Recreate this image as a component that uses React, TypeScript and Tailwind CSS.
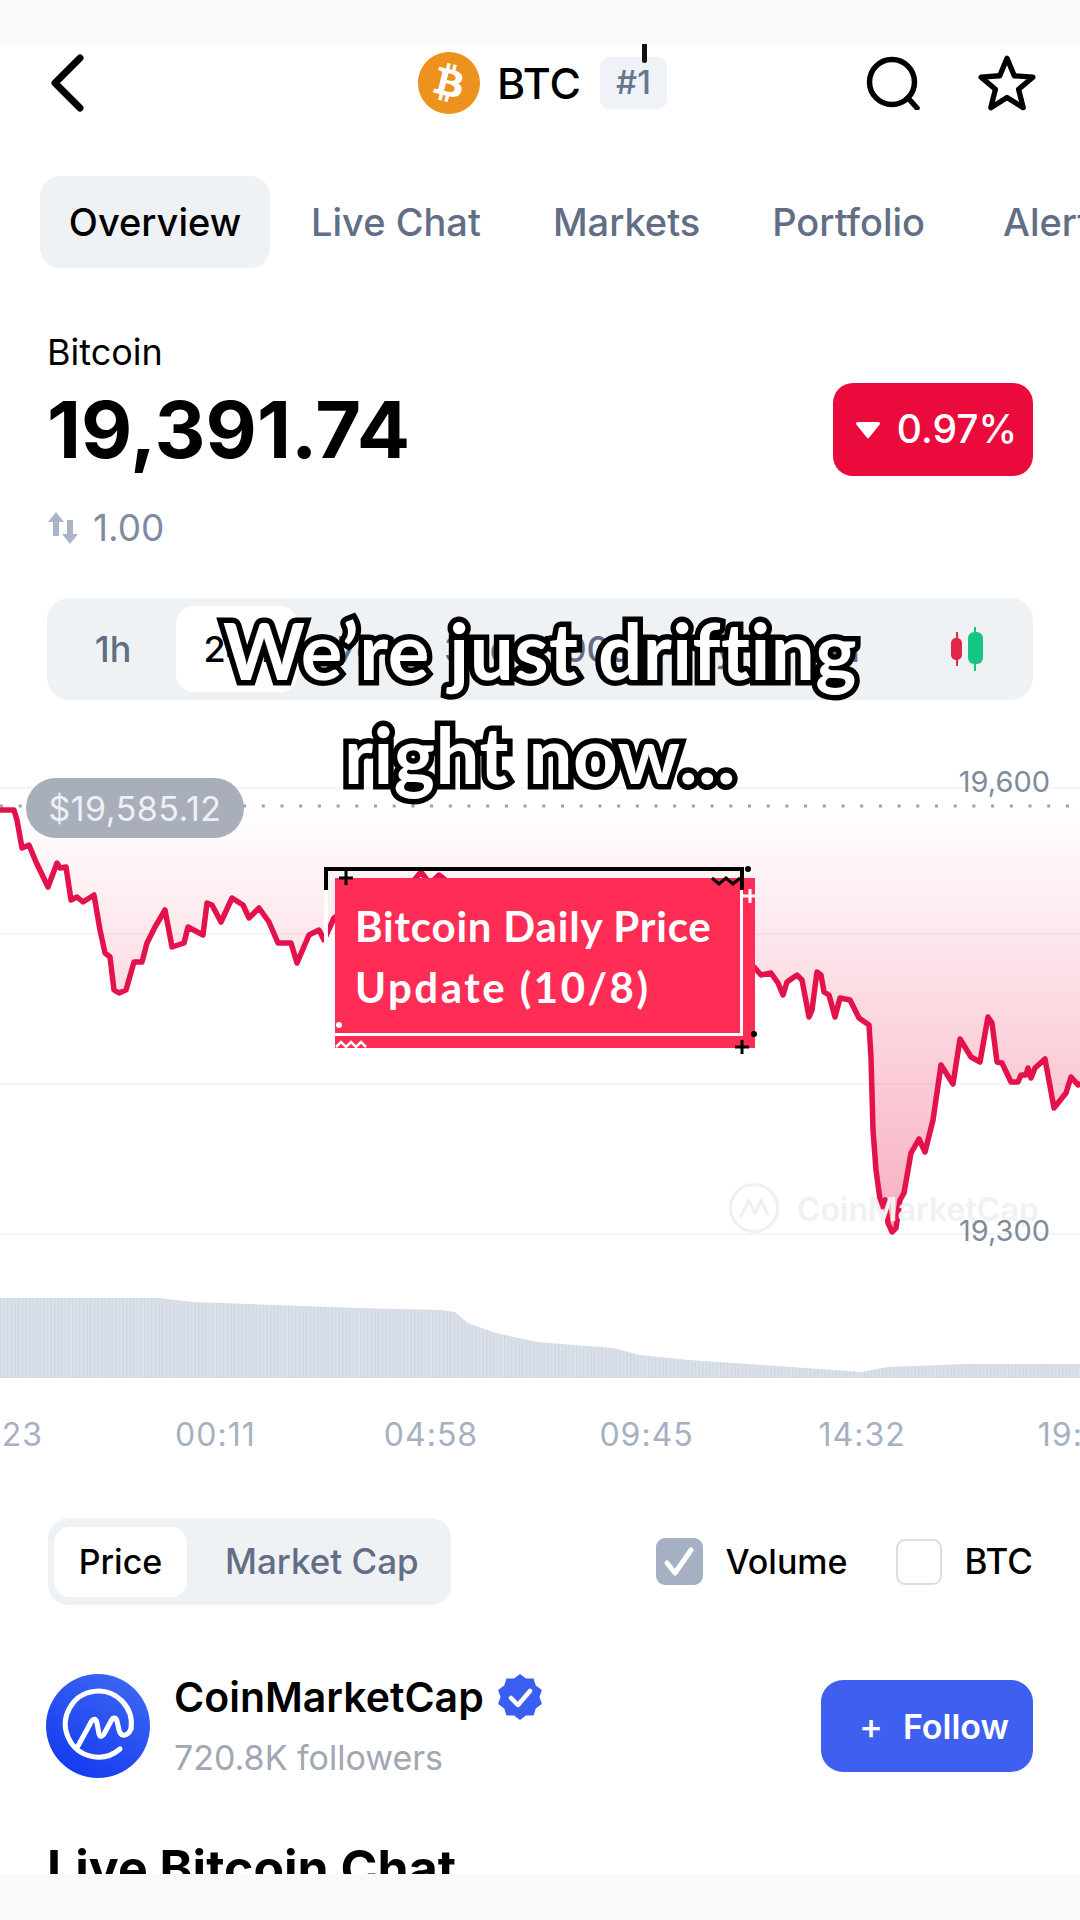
import React from "react";
import { FaBitcoin } from "react-icons/fa";

const linePts: [number, number][] = [
  [0,810],[14,810],[17,820],[22,848],[29,845],[36,862],[48,887],[57,863],[60,868],[66,867],[71,900],[77,897],[83,902],[94,895],[100,930],[105,953],[110,957],[114,990],[119,993],[126,990],[134,962],[142,962],[147,943],[155,927],[165,910],[172,947],[184,943],[188,927],[203,935],[207,903],[212,905],[221,922],[232,898],[243,905],[249,918],[259,908],[269,922],[278,943],[291,943],[297,963],[309,935],[319,930],[324,940],[334,918],[360,900],[390,890],[410,885],[421,872],[430,884],[439,875],[470,900],[540,920],[620,930],[700,945],[754,967],
  [761,975],[771,973],[778,983],[783,995],[787,982],[797,975],[802,980],[809,1017],[812,1010],[817,972],[821,975],[824,992],[829,995],[835,1017],[840,998],[850,1000],[859,1018],[869,1025],[871,1057],[873,1130],[876,1170],[881,1207],[885,1200],[888,1223],[892,1232],[896,1228],[900,1200],[904,1193],[911,1153],[919,1139],[925,1152],[933,1120],[941,1065],[953,1084],[960,1039],[971,1057],[980,1062],[988,1017],[992,1023],[997,1062],[1002,1063],[1011,1082],[1018,1082],[1021,1075],[1026,1075],[1028,1068],[1031,1078],[1035,1068],[1045,1059],[1054,1108],[1066,1093],[1071,1077],[1078,1085],[1080,1084],
];
const OY = 760;
const lineStr = linePts.map(([x, y]) => `${x},${y - OY}`).join(" ");
const areaStr = `0,${806 - OY} ${lineStr} 1080,${806 - OY}`;
const volTop: [number, number][] = [[0,1298],[158,1298],[193,1302],[275,1305],[358,1308],[441,1310],[455,1312],[468,1323],[496,1333],[537,1342],[613,1348],[640,1355],[689,1360],[792,1367],[861,1372],[888,1367],[964,1364],[1080,1364]];
const volStr = `0,98 ${volTop.map(([x, y]) => `${x},${y - 1280}`).join(" ")} 1080,98`;
const badgePts = Array.from({ length: 20 }, (_, i) => {
  const r = i % 2 === 0 ? 23 : 19.5;
  const a = (i * Math.PI) / 10 - Math.PI / 2;
  return `${23 + r * Math.cos(a)},${23 + r * Math.sin(a)}`;
}).join(" ");

export default function App() {
  return (
    <div className="relative w-[1080px] h-[1920px] overflow-hidden bg-white text-black flex flex-col font-['Inter','Liberation_Sans',sans-serif]">
      <div className="h-[44px] shrink-0 bg-[#f9f9f9]" />

      {/* Header */}
      <header className="relative h-[78px] shrink-0 flex items-center pl-[50px] pr-[44px] justify-between">
        <svg width="34" height="58" viewBox="0 0 34 58" fill="none" stroke="#000" strokeWidth="7" strokeLinecap="round" strokeLinejoin="round">
          <path d="M30 4 5 29l25 25" />
        </svg>
        <div className="absolute left-[417px] top-[7px] flex items-center">
          <FaBitcoin className="text-[#ee921f] w-[64px] h-[64px]" />
          <span className="ml-[16px] w-[86px] text-[43px] leading-none font-medium">BTC</span>
          <span className="ml-[17px] w-[67px] h-[52px] rounded-[9px] bg-[#eff2f7] flex items-center justify-center text-[#67758f] text-[33px] font-medium">#1</span>
        </div>
        <span className="absolute left-[642px] top-0 w-[5px] h-[19px] rounded-b-[3px] bg-[#111]" />
        <div className="flex items-center gap-[58px]">
          <svg width="54" height="54" viewBox="0 0 54 54" fill="none" stroke="#000" strokeWidth="5.5" strokeLinecap="round">
            <circle cx="26" cy="26" r="22.5" />
            <path d="M42 42l9 10" />
          </svg>
          <svg width="58" height="58" viewBox="0 0 24 24" fill="none" stroke="#000" strokeWidth="2.2" strokeLinejoin="round">
            <path d="M12 1.8l3 7.2 7.7.6-5.900 5 1.900 7.600L12 18l-6.700 4.200 1.900-7.600-5.900-5 7.700-.6z" />
          </svg>
        </div>
      </header>

      {/* Tabs */}
      <nav className="h-[92px] mt-[54px] shrink-0 pl-[40px] flex items-center whitespace-nowrap overflow-hidden text-[38px] font-medium text-[#616e85]">
        <span className="w-[230px] shrink-0 h-full rounded-[20px] bg-[#eff2f5] flex items-center justify-center text-black">Overview</span>
        <span className="ml-[41px]">Live Chat</span>
        <span className="ml-[72px]">Markets</span>
        <span className="ml-[72px]">Portfolio</span>
        <span className="ml-[78px]">Alerts</span>
      </nav>

      {/* Price */}
      <section className="relative px-[47px] mt-[62px] h-[268px] shrink-0">
        <div className="text-[36px] leading-[44px]">Bitcoin</div>
        <div className="mt-[9px] text-[79px] leading-[92px] font-bold">19,391.74</div>
        <div className="mt-[31px] flex items-center text-[37px] leading-[44px] text-[#7f8ba1]">
          <svg width="32" height="34" viewBox="0 0 32 34" className="mr-[14px]" fill="#a9b4c6">
            <path d="M9 1 1 11h5v14h6V11h5z" />
            <path d="M23 33l8-10h-5V9h-6v14h-5z" />
          </svg>
          1.00
        </div>
        <div className="absolute right-[47px] top-[53px] w-[200px] h-[93px] rounded-[20px] bg-[#ea0a3c] text-white flex items-center justify-center pl-[6px] gap-[16px] text-[39px] font-medium">
          <svg width="26" height="18" viewBox="0 0 24 17" fill="#fff"><path d="M2 1h20a1.500 1.500 0 0 1 1 2.400L13.200 15.600a1.500 1.500 0 0 1-2.400 0L1 3.400A1.500 1.500 0 0 1 2 1z" /></svg>
          0.97%
        </div>
      </section>

      {/* Range selector */}
      <div className="mx-[47px] h-[102px] shrink-0 rounded-[22px] bg-[#eff2f5] flex items-center text-[36px] font-medium text-[#616e85]">
        <span className="w-[132px] shrink-0 text-center">1h</span>
        <span className="-ml-[3px] w-[122px] shrink-0 h-[86px] rounded-[18px] bg-white flex items-center justify-center text-black">24h</span>
        <span className="w-[120px] shrink-0 text-center">7d</span>
        <span className="w-[120px] shrink-0 text-center">30d</span>
        <span className="w-[120px] shrink-0 text-center">90d</span>
        <span className="w-[120px] shrink-0 text-center">1y</span>
        <span className="w-[120px] shrink-0 text-center">All</span>
        <svg width="34" height="44" viewBox="0 0 34 44" className="ml-[52px] shrink-0">
          <path d="M7 5v34" stroke="#e0264a" strokeWidth="2" />
          <rect x="1" y="11" width="11" height="22" rx="5" fill="#e0264a" />
          <path d="M25 0v44" stroke="#16c784" strokeWidth="2" />
          <rect x="18" y="5" width="15" height="32" rx="6" fill="#16c784" />
        </svg>
      </div>

      {/* Chart */}
      <div className="relative h-[520px] shrink-0 mt-[60px]">
        <svg width="1080" height="520" viewBox="0 0 1080 520" className="block overflow-visible">
          <defs>
            <linearGradient id="fill" x1="0" y1={46} x2="0" y2={472} gradientUnits="userSpaceOnUse">
              <stop offset="0" stopColor="#ef476f" stopOpacity="0" />
              <stop offset="1" stopColor="#ee3c66" stopOpacity="0.42" />
            </linearGradient>
            <pattern id="bars" width="3.6" height="10" patternUnits="userSpaceOnUse">
              <rect width="3.6" height="10" fill="#dbe1ea" />
              <rect width="1.2" height="10" fill="#cfd7e3" />
            </pattern>
          </defs>
          {[27, 173, 323, 473].map((y) => (
            <rect key={y} x="0" y={y} width="1080" height="2" fill="#f4f5f7" />
          ))}
          <polygon points={areaStr} fill="url(#fill)" />
          <line x1="0" y1="46" x2="1080" y2="46" stroke="#9aa0ab" strokeWidth="3" strokeDasharray="3 15.7" />
          <g transform="translate(729 423)" opacity="0.9">
            <circle cx="25" cy="25" r="23.500" fill="none" stroke="#eeeff1" strokeWidth="3" />
            <path d="M11 35l9-18 6 14 6-14 7 15" fill="none" stroke="#eeeff1" strokeWidth="3" strokeLinejoin="round" />
          </g>
          <polyline points={lineStr} fill="none" stroke="#e4124b" strokeWidth="5.5" strokeLinejoin="round" strokeLinecap="round" />
        </svg>
        <span className="absolute left-[797px] top-[432px] text-[32px] leading-[36px] font-semibold text-[#f0f1f3]">CoinMarketCap</span>
        <span className="absolute right-[30px] top-[4px] text-[29px] leading-[36px] text-[#808a9d]">19,600</span>
        <span className="absolute right-[30px] top-[453px] text-[29px] leading-[36px] text-[#808a9d]">19,300</span>
        <span className="absolute left-[26px] top-[18px] w-[218px] h-[60px] rounded-[30px] bg-[#a9aebb] text-[#eef0f4] text-[34px] tracking-[0.5px] flex items-center justify-center">$19,585.12</span>
      </div>

      {/* Volume */}
      <svg width="1080" height="98" viewBox="0 0 1080 98" className="block shrink-0">
        <polygon points={volStr} fill="url(#bars)" />
      </svg>

      {/* Time axis */}
      <div className="mt-[27px] h-[60px] shrink-0 flex items-center -ml-[108px] text-[32px] tracking-[1px] text-[#a6b0c3] whitespace-nowrap">
        {["19:23", "00:11", "04:58", "09:45", "14:32", "19:19"].map((t) => (
          <span key={t} className="w-[215.6px] shrink-0 text-center">{t}</span>
        ))}
      </div>

      {/* Toggle row */}
      <div className="mt-[53px] h-[87px] shrink-0 pl-[48px] pr-[47px] flex items-center justify-between text-[34px] font-medium">
        <div className="w-[403px] h-full rounded-[20px] bg-[#eff2f5] flex items-center pl-[6px]">
          <span className="w-[133px] h-[70px] rounded-[16px] bg-white flex items-center justify-center">Price</span>
          <span className="ml-[38px] text-[35px] text-[#616e85]">Market Cap</span>
        </div>
        <div className="flex items-center">
          <span className="w-[47px] h-[47px] rounded-[9px] bg-[#a6b0c3] flex items-center justify-center">
            <svg width="36" height="36" viewBox="0 0 36 36" fill="none" stroke="#fff" strokeWidth="5" strokeLinecap="round" strokeLinejoin="round"><path d="M6 19l8 10L30 6" /></svg>
          </span>
          <span className="ml-[23px]">Volume</span>
          <span className="ml-[48px] w-[46px] h-[46px] rounded-[9px] border-2 border-[#d9dee6]" />
          <span className="ml-[23px] text-[35px]">BTC</span>
        </div>
      </div>

      {/* Account */}
      <div className="mt-[69px] h-[104px] shrink-0 pl-[46px] pr-[47px] flex items-center justify-between">
        <div className="flex items-center">
          <svg width="104" height="104" viewBox="0 0 104 104" className="shrink-0">
            <defs>
              <linearGradient id="cmc" x1="0.8" y1="0" x2="0.2" y2="1">
                <stop offset="0" stopColor="#3e68f4" />
                <stop offset="1" stopColor="#1238ef" />
              </linearGradient>
            </defs>
            <circle cx="52" cy="52" r="52" fill="url(#cmc)" />
            <g fill="none" stroke="#fff" strokeWidth="5" strokeLinecap="round" strokeLinejoin="round">
              <path d="M85 55A33 33 0 1 0 74 75" />
              <path d="M32 72L44 50C46 45 50 43 51 49L53 60C54 64 57 62 58 60L65 47C67 43 70 43 71 47L73 56C75 64 82 62 85 55" />
            </g>
          </svg>
          <div className="ml-[24px]">
            <div className="flex items-center h-[46px]">
              <span className="text-[41px] leading-[46px] font-semibold">CoinMarketCap</span>
              <svg width="46" height="46" viewBox="0 0 46 46" className="ml-[13px]">
                <polygon fill="#3a5ff0" points={badgePts} />
                <path d="M14 24l7 7 12-14" fill="none" stroke="#fff" strokeWidth="4.5" strokeLinecap="round" strokeLinejoin="round" />
              </svg>
            </div>
            <div className="mt-[18px] text-[34px] leading-[40px] text-[#a1a7b3]">720.8K followers</div>
          </div>
        </div>
        <div className="w-[212px] h-[92px] rounded-[22px] bg-[#3e5ff0] text-white flex items-center justify-center pl-[14px] text-[34px] font-semibold">
          <span className="mr-[20px] text-[36px] font-medium">+</span>Follow
        </div>
      </div>

      {/* Heading */}
      <div className="mt-[64px] pl-[47px] text-[50px] leading-[52px] font-bold whitespace-nowrap">Live Bitcoin Chat</div>

      {/* Bottom bar */}
      <div className="absolute left-0 right-0 bottom-0 h-[46px] bg-[#f8fafa]" />

      {/* Sticker */}
      <div className="absolute left-[335px] top-[878px] w-[420px] h-[170px] bg-[#ff2d55] text-white font-['Lato',sans-serif] font-bold text-[42px] leading-[61px]">
        <div className="pl-[20px] pt-[18px] whitespace-nowrap">
          <div className="tracking-[0.8px]">Bitcoin Daily Price</div>
          <div className="tracking-[2.5px]">Update (10/8)</div>
        </div>
        <div className="absolute left-0 top-[155px] w-[408px] h-[3px] bg-white" />
        <div className="absolute left-[405px] top-[12px] w-[3px] h-[146px] bg-white" />
      </div>
      <svg width="460" height="200" viewBox="0 0 460 200" className="absolute left-[320px] top-[862px]">
        <path d="M6 28V7h416v21" fill="none" stroke="#000" strokeWidth="4" />
        <path d="M6 28v100" stroke="#fff" strokeWidth="4" />
        <path d="M26 9v14M19 16h14" stroke="#000" strokeWidth="3" />
        <path d="M392 16l7 6 7-6 7 6 7-6" fill="none" stroke="#000" strokeWidth="3" />
        <circle cx="428" cy="7" r="3" fill="#000" />
        <path d="M430 27v14M423 34h14" stroke="#fff" strokeWidth="3" />
        <circle cx="434" cy="172" r="3" fill="#000" />
        <path d="M422 178v14M415 185h14" stroke="#000" strokeWidth="3" />
        <circle cx="19" cy="163" r="3" fill="#fff" />
        <path d="M16 185l5-5 5 5 5-5 5 5 5-5 5 5" fill="none" stroke="#fff" strokeWidth="2.5" />
      </svg>

      {/* Caption */}
      <div className="absolute left-0 right-0 top-[598px] text-center text-white font-['Lato',sans-serif] font-bold text-[78px] leading-[104px] tracking-[0.5px] whitespace-nowrap [-webkit-text-stroke:11px_#000] [paint-order:stroke_fill]">
        We’re just drifting<br />right now...
      </div>
    </div>
  );
}
